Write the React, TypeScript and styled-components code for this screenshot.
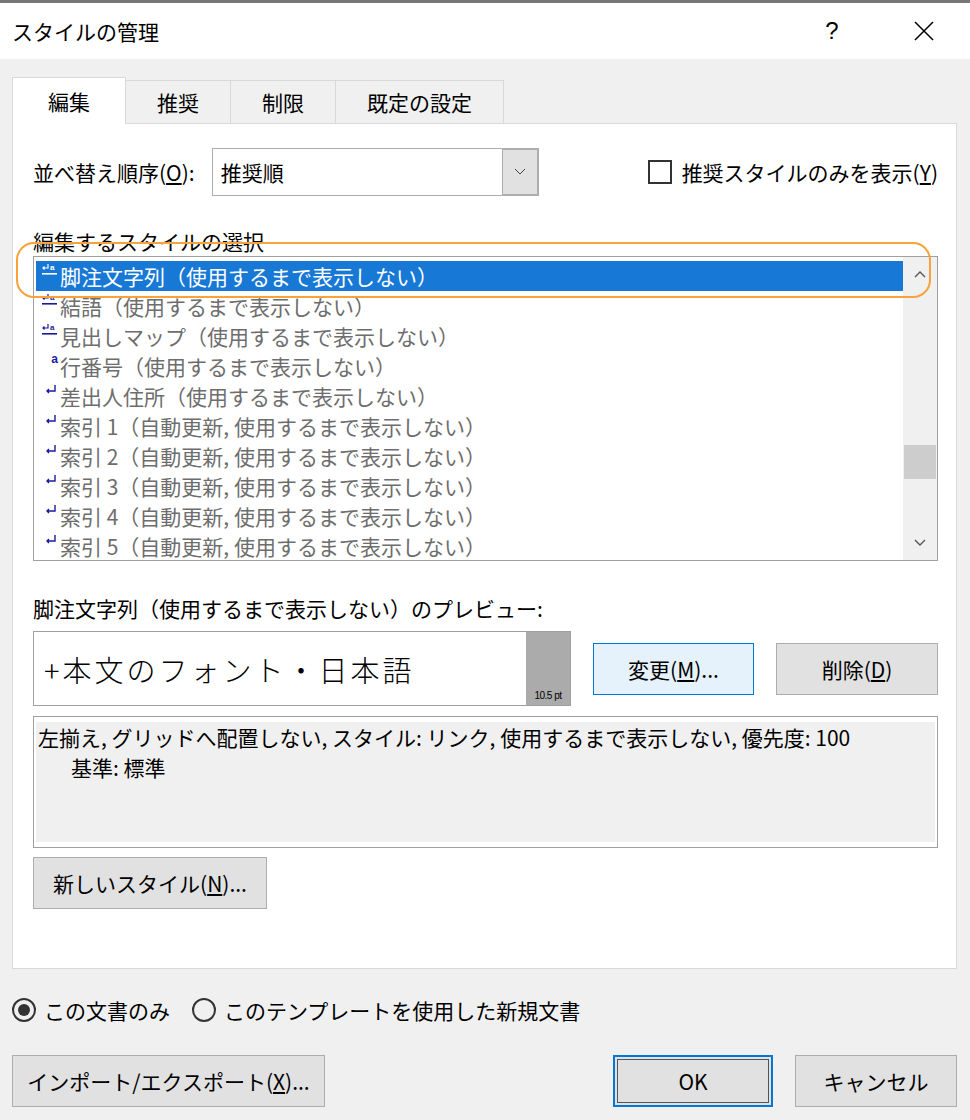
import React from "react";
import styled, { createGlobalStyle } from "styled-components";

const Global = createGlobalStyle`
  body { margin: 0; background: #f0f0f0; font-family: "Noto Sans CJK JP", "Noto Sans", sans-serif; color: #000; }
`;

const styles = [
  { icon: "link", name: "脚注文字列", note: "（使用するまで表示しない）", selected: true },
  { icon: "link", name: "結語", note: "（使用するまで表示しない）" },
  { icon: "link", name: "見出しマップ", note: "（使用するまで表示しない）" },
  { icon: "char", name: "行番号", note: "（使用するまで表示しない）" },
  { icon: "para", name: "差出人住所", note: "（使用するまで表示しない）" },
  { icon: "para", name: "索引 1", note: "（自動更新, 使用するまで表示しない）" },
  { icon: "para", name: "索引 2", note: "（自動更新, 使用するまで表示しない）" },
  { icon: "para", name: "索引 3", note: "（自動更新, 使用するまで表示しない）" },
  { icon: "para", name: "索引 4", note: "（自動更新, 使用するまで表示しない）" },
  { icon: "para", name: "索引 5", note: "（自動更新, 使用するまで表示しない）" },
];

const StyleIcon: React.FC<{ kind: string; selected?: boolean }> = ({ kind, selected }) => {
  const c = selected ? "#fff" : "#1a1a9c";
  if (kind === "char") return <IconText color={selected ? "#fff" : "#1a1a9c"}>a</IconText>;
  if (kind === "para")
    return (
      <svg width="14" height="14" viewBox="0 0 14 14">
        <path d="M11 2v6H3M5 6l-2 2 2 2" stroke="#1a1a9c" strokeWidth="1.4" fill="none" />
      </svg>
    );
  return (
    <svg width="16" height="14" viewBox="0 0 16 14">
      <path d="M6 1v4H1M2.5 3.5L1 5l1.5 1.5" stroke={c} strokeWidth="1.2" fill="none" />
      <text x="8" y="7" fontSize="8" fontWeight="bold" fill={c} fontFamily="Liberation Sans">a</text>
      <rect x="0" y="10" width="15" height="1.6" fill={c} />
    </svg>
  );
};

const App: React.FC = () => (
  <>
    <Global />
    <Window>
      <TitleBar>
        <Title>スタイルの管理</Title>
        <TitleButtons>
          <TitleBtn>?</TitleBtn>
          <TitleBtn>
            <svg width="22" height="22" viewBox="0 0 22 22">
              <path d="M2 2l18 18M20 2L2 20" stroke="#000" strokeWidth="1.5" />
            </svg>
          </TitleBtn>
        </TitleButtons>
      </TitleBar>
      <Body>
        <Tabs>
          <Tab active>編集</Tab>
          <Tab>推奨</Tab>
          <Tab>制限</Tab>
          <Tab>既定の設定</Tab>
        </Tabs>
        <Panel>
          <SortRow>
            <Label>並べ替え順序(<u>O</u>):</Label>
            <Combo>
              <ComboText>推奨順</ComboText>
              <ComboArrow>
                <svg width="12" height="8" viewBox="0 0 12 8"><path d="M1 1l5 5 5-5" stroke="#444" fill="none" /></svg>
              </ComboArrow>
            </Combo>
            <CheckLabel>
              <CheckBox />
              推奨スタイルのみを表示(<u>Y</u>)
            </CheckLabel>
          </SortRow>
          <SectionLabel>編集するスタイルの選択</SectionLabel>
          <ListWrap>
            <Highlight />
            <List>
              <Rows>
                {styles.map((s, i) => (
                  <Row key={i} selected={s.selected}>
                    <IconCell><StyleIcon kind={s.icon} selected={s.selected} /></IconCell>
                    {s.name}{s.note}
                  </Row>
                ))}
              </Rows>
              <ScrollBar>
                <ScrollArrow>
                  <svg width="12" height="8" viewBox="0 0 12 8"><path d="M1 7l5-5 5 5" stroke="#555" strokeWidth="1.4" fill="none" /></svg>
                </ScrollArrow>
                <Track><Thumb /></Track>
                <ScrollArrow>
                  <svg width="12" height="8" viewBox="0 0 12 8"><path d="M1 1l5 5 5-5" stroke="#555" strokeWidth="1.4" fill="none" /></svg>
                </ScrollArrow>
              </ScrollBar>
            </List>
          </ListWrap>
          <PreviewLabel>脚注文字列（使用するまで表示しない）のプレビュー:</PreviewLabel>
          <PreviewRow>
            <Preview>
              <PreviewText>+本文のフォント・日本語</PreviewText>
              <SizeStrip>10.5 pt</SizeStrip>
            </Preview>
            <Button primary width={161}>変更(<u>M</u>)...</Button>
            <Button width={162}>削除(<u>D</u>)</Button>
          </PreviewRow>
          <Desc>
            <DescInner>
              左揃え, グリッドへ配置しない, スタイル: リンク, 使用するまで表示しない, 優先度: 100
              <br />
              <Indent>基準: 標準</Indent>
            </DescInner>
          </Desc>
          <Button width={234}>新しいスタイル(<u>N</u>)...</Button>
        </Panel>
        <RadioRow>
          <RadioLabel><Radio checked />この文書のみ</RadioLabel>
          <RadioLabel><Radio />このテンプレートを使用した新規文書</RadioLabel>
        </RadioRow>
        <Footer>
          <Button width={313}>インポート/エクスポート(<u>X</u>)...</Button>
          <Spacer />
          <Button width={160} focused>OK</Button>
          <Button width={162}>キャンセル</Button>
        </Footer>
      </Body>
    </Window>
  </>
);

export default App;

const Window = styled.div`
  width: 970px;
  height: 1120px;
  background: #f0f0f0;
  border-top: 3px solid #777;
  box-sizing: border-box;
`;

const TitleBar = styled.div`
  height: 56px;
  background: #fff;
  display: flex;
  align-items: center;
  justify-content: space-between;
  padding-left: 12px;
`;

const Title = styled.div`
  font-size: 21px;
`;

const TitleButtons = styled.div`
  display: flex;
`;

const TitleBtn = styled.div`
  width: 92px;
  height: 56px;
  display: flex;
  align-items: center;
  justify-content: center;
  font-size: 24px;
  font-family: "Liberation Sans", sans-serif;
`;

const Body = styled.div`
  padding: 17px 13px 0 12px;
`;

const Tabs = styled.div`
  display: flex;
  align-items: flex-end;
  height: 47px;
`;

const Tab = styled.div<{ active?: boolean }>`
  height: ${(p) => (p.active ? 47 : 43)}px;
  padding: 0 ${(p) => (p.active ? 35 : 31)}px;
  display: flex;
  align-items: center;
  font-size: 21px;
  background: ${(p) => (p.active ? "#fff" : "#f0f0f0")};
  border: 1px solid #d9d9d9;
  border-bottom: none;
  margin-right: -1px;
  position: relative;
  z-index: ${(p) => (p.active ? 1 : 0)};
  margin-bottom: ${(p) => (p.active ? -1 : 0)}px;
  box-sizing: border-box;
`;

const Panel = styled.div`
  background: #fff;
  border: 1px solid #d9d9d9;
  height: 846px;
  box-sizing: border-box;
  padding: 24px 18px 0 20px;
`;

const SortRow = styled.div`
  display: flex;
  align-items: center;
  height: 48px;
`;

const Label = styled.div`
  font-size: 21px;
  margin-right: 17px;
`;

const Combo = styled.div`
  width: 327px;
  height: 48px;
  border: 1px solid #adadad;
  box-sizing: border-box;
  display: flex;
`;

const ComboText = styled.div`
  flex: 1;
  font-size: 21px;
  display: flex;
  align-items: center;
  padding-left: 8px;
`;

const ComboArrow = styled.div`
  width: 34px;
  background: #e1e1e1;
  border: 1px solid #adadad;
  display: flex;
  align-items: center;
  justify-content: center;
`;

const CheckLabel = styled.div`
  margin-left: auto;
  display: flex;
  align-items: center;
  font-size: 21px;
`;

const CheckBox = styled.div`
  width: 20px;
  height: 20px;
  border: 2px solid #333;
  margin-right: 10px;
`;

const SectionLabel = styled.div`
  font-size: 21px;
  margin-top: 30px;
  line-height: 30px;
`;

const ListWrap = styled.div`
  position: relative;
`;

const Highlight = styled.div`
  position: absolute;
  left: -17px;
  top: -14px;
  width: 911px;
  height: 52px;
  border: 2.5px solid #f7a23b;
  border-radius: 18px;
  z-index: 2;
  pointer-events: none;
`;

const List = styled.div`
  height: 305px;
  border: 1px solid #a0a0a0;
  box-sizing: border-box;
  display: flex;
  padding: 4px 0 0 2px;
  overflow: hidden;
`;

const Rows = styled.div`
  flex: 1;
`;

const Row = styled.div<{ selected?: boolean }>`
  height: 30px;
  display: flex;
  align-items: center;
  font-size: 21px;
  white-space: nowrap;
  color: ${(p) => (p.selected ? "#fff" : "#6d6d6d")};
  background: ${(p) => (p.selected ? "#1878d6" : "transparent")};
`;

const IconCell = styled.div`
  width: 24px;
  height: 30px;
  display: flex;
  justify-content: flex-end;
  align-items: flex-start;
  padding: 2px 2px 0 0;
  box-sizing: border-box;
`;

const IconText = styled.span<{ color: string }>`
  font-size: 12px;
  font-weight: bold;
  color: ${(p) => p.color};
  font-family: "Liberation Sans", sans-serif;
  line-height: 12px;
`;

const ScrollBar = styled.div`
  width: 34px;
  background: #f0f0f0;
  display: flex;
  flex-direction: column;
  margin-top: -4px;
`;

const ScrollArrow = styled.div`
  height: 34px;
  display: flex;
  align-items: center;
  justify-content: center;
`;

const Track = styled.div`
  flex: 1;
  position: relative;
`;

const Thumb = styled.div`
  position: absolute;
  top: 154px;
  left: 1px;
  right: 1px;
  height: 34px;
  background: #cdcdcd;
`;

const PreviewLabel = styled.div`
  font-size: 21px;
  margin-top: 32px;
  line-height: 30px;
`;

const PreviewRow = styled.div`
  display: flex;
  align-items: center;
  gap: 22px;
  margin-top: 8px;
`;

const Preview = styled.div`
  width: 538px;
  height: 75px;
  border: 1px solid #a0a0a0;
  box-sizing: border-box;
  display: flex;
`;

const PreviewText = styled.div`
  flex: 1;
  font-family: "Noto Sans CJK JP", serif;
  font-weight: 300;
  font-size: 29px;
  letter-spacing: 3px;
  display: flex;
  align-items: center;
  padding-left: 10px;
`;

const SizeStrip = styled.div`
  width: 44px;
  background: #ababab;
  font-size: 10px;
  font-family: "Liberation Sans", sans-serif;
  display: flex;
  align-items: flex-end;
  justify-content: center;
  padding-bottom: 4px;
  letter-spacing: -0.5px;
`;

const Button = styled.div<{ width: number; primary?: boolean; focused?: boolean }>`
  width: ${(p) => p.width}px;
  height: 52px;
  box-sizing: border-box;
  display: flex;
  align-items: center;
  justify-content: center;
  font-size: 21px;
  background: ${(p) => (p.primary ? "#e5f1fb" : "#e1e1e1")};
  border: 1px solid ${(p) => (p.primary ? "#0078d7" : "#adadad")};
  box-shadow: ${(p) => (p.focused ? "inset 0 0 0 1px #0078d7, inset 0 0 0 2px #e1e1e1, inset 0 0 0 3px #222" : "none")};
  ${(p) => (p.focused ? "border: 2px solid #0078d7; box-shadow: inset 0 0 0 2px #e1e1e1, inset 0 0 0 3px #555;" : "")}
`;

const Desc = styled.div`
  margin-top: 10px;
  height: 132px;
  border: 1px solid #a0a0a0;
  box-sizing: border-box;
  padding: 5px 2px 5px 2px;
  margin-bottom: 9px;
`;

const DescInner = styled.div`
  background: #f0f0f0;
  height: 100%;
  font-size: 21px;
  line-height: 30px;
  padding-left: 2px;
`;

const Indent = styled.span`
  padding-left: 33px;
`;

const RadioRow = styled.div`
  display: flex;
  gap: 22px;
  margin-top: 26px;
  height: 30px;
  align-items: center;
`;

const RadioLabel = styled.div`
  display: flex;
  align-items: center;
  font-size: 21px;
`;

const Radio = styled.div<{ checked?: boolean }>`
  width: 20px;
  height: 20px;
  border: 2px solid #333;
  border-radius: 50%;
  margin-right: 8px;
  position: relative;
  &::after {
    content: "";
    display: ${(p) => (p.checked ? "block" : "none")};
    position: absolute;
    inset: 4px;
    border-radius: 50%;
    background: #333;
  }
`;

const Footer = styled.div`
  display: flex;
  gap: 22px;
  margin-top: 30px;
`;

const Spacer = styled.div`
  flex: 1;
`;
